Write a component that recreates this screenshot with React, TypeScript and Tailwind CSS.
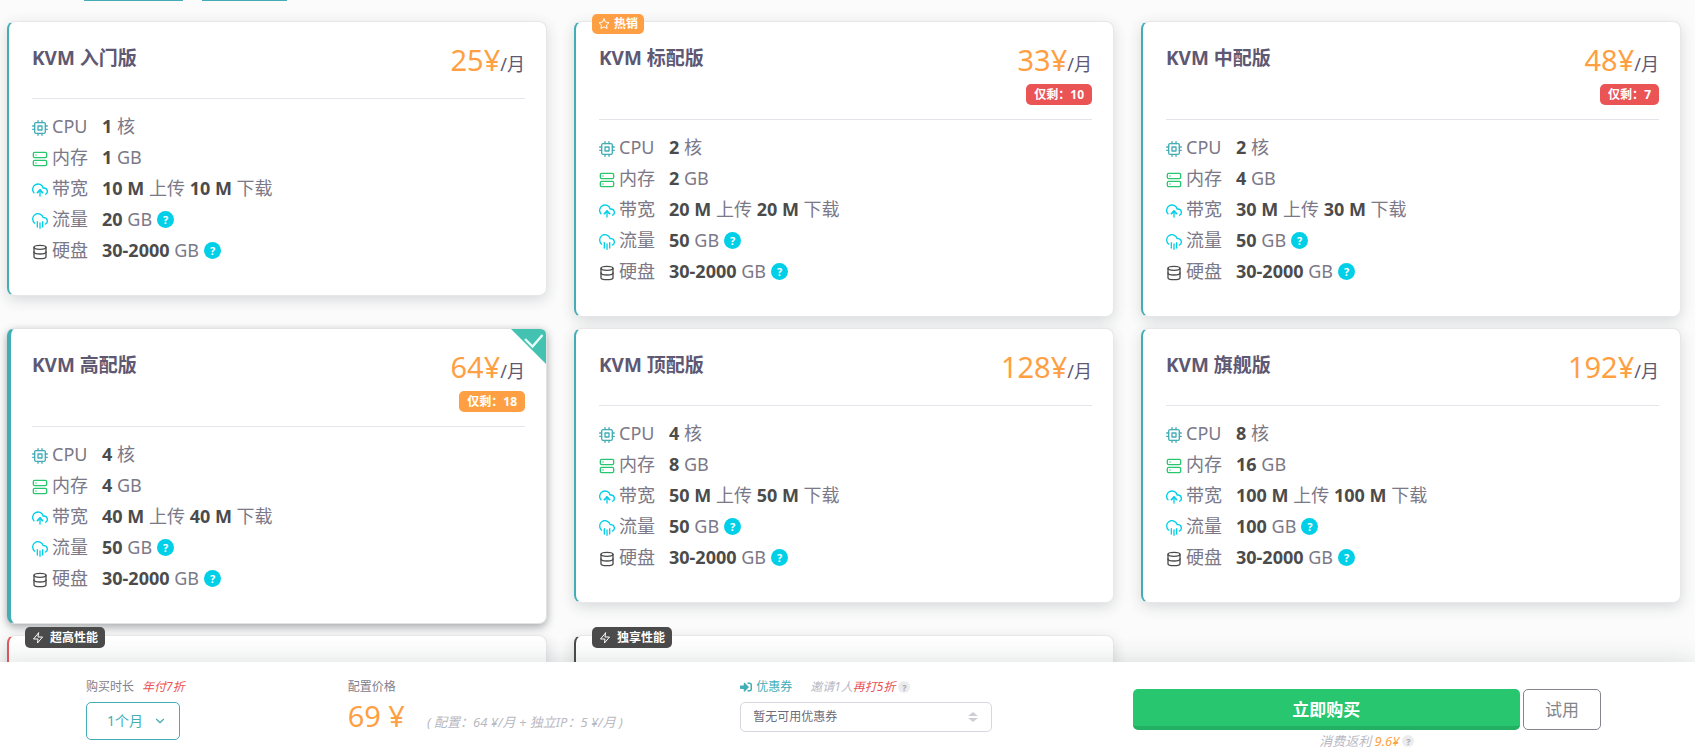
import React, { useState } from "react";
import clsx from "clsx";
import {
  FiChevronDown,
  FiCloudRain,
  FiCpu,
  FiDatabase,
  FiServer,
  FiStar,
  FiUploadCloud,
  FiZap,
} from "react-icons/fi";
import { FaSignInAlt } from "react-icons/fa";

interface Plan {
  id: string;
  name: string;
  price: number;
  left?: number;
  hot?: boolean;
  cores: number;
  memory: number;
  bandwidth: number;
  traffic: number;
}

const PLANS: Plan[] = [
  { id: "entry", name: "KVM 入门版", price: 25, cores: 1, memory: 1, bandwidth: 10, traffic: 20 },
  { id: "standard", name: "KVM 标配版", price: 33, left: 10, hot: true, cores: 2, memory: 2, bandwidth: 20, traffic: 50 },
  { id: "medium", name: "KVM 中配版", price: 48, left: 7, cores: 2, memory: 4, bandwidth: 30, traffic: 50 },
  { id: "high", name: "KVM 高配版", price: 64, left: 18, cores: 4, memory: 4, bandwidth: 40, traffic: 50 },
  { id: "top", name: "KVM 顶配版", price: 128, cores: 4, memory: 8, bandwidth: 50, traffic: 50 },
  { id: "flagship", name: "KVM 旗舰版", price: 192, cores: 8, memory: 16, bandwidth: 100, traffic: 100 },
];

function HelpButton() {
  return (
    <button
      type="button"
      aria-label="说明"
      className="ml-[5px] flex size-[17px] items-center justify-center rounded-full bg-[#00cfe8] text-[11px] leading-none font-bold text-white"
    >
      ?
    </button>
  );
}

function MutedHelp() {
  return (
    <button
      type="button"
      aria-label="说明"
      className="inline-flex size-3 items-center justify-center rounded-full bg-[#ececee] text-[9px] leading-none font-bold text-[#a9a7b0] not-italic"
    >
      ?
    </button>
  );
}

interface SpecRowProps {
  icon: React.ReactNode;
  label: string;
  help?: boolean;
  children: React.ReactNode;
}

function SpecRow({ icon, label, help, children }: SpecRowProps) {
  return (
    <li className="flex h-[31px] items-center">
      <span className="mt-[3px] mr-1 text-base">{icon}</span>
      <span className="w-[50px]">{label}</span>
      <span className="flex items-center whitespace-pre">
        {children}
        {help && <HelpButton />}
      </span>
    </li>
  );
}

function Num({ children }: { children: React.ReactNode }) {
  return <b className="font-bold text-[#4b4b4b]">{children}</b>;
}

interface PlanCardProps {
  plan: Plan;
  selected: boolean;
  onSelect: (id: string) => void;
}

function PlanCard({ plan, selected, onSelect }: PlanCardProps) {
  return (
    <article
      onClick={() => onSelect(plan.id)}
      className={clsx(
        "relative cursor-pointer rounded-lg border bg-white pt-[18px] pr-[21px] pb-7",
        selected
          ? "border-l-4 border-[#e2e3e4] border-l-[#43adb6] pl-[21px] shadow-[0_3px_9px_rgba(34,41,47,0.4)]"
          : "border-l-2 border-[#e7e7e9] border-l-[#43adb6] pl-[23px] shadow-[0_4px_14px_rgba(34,41,47,0.16)]"
      )}
    >
      {plan.hot && (
        <span className="absolute -top-2 left-4 flex h-5 items-center gap-1 rounded-[5px] bg-[#ff9f43] px-1.5 text-xs font-bold text-white">
          <FiStar />
          热销
        </span>
      )}
      {selected && (
        <svg className="absolute top-0 right-0 size-[35px]" viewBox="0 0 35 35">
          <path d="M0 0H29Q35 0 35 6V35Z" fill="#43c2b1" />
          <path d="M14 10l7.5 7.5L31.5 6" fill="none" stroke="#e9fffb" strokeWidth="2.4" />
        </svg>
      )}

      {/* Name and price */}
      <header className="flex items-start justify-between border-b border-[#e4e4ea] pb-[14px]">
        <h4 className="mt-[5px] text-[19px] leading-[27px] font-bold text-[#5e5873]">{plan.name}</h4>
        <div className="flex flex-col items-end">
          <div className="flex h-11 items-baseline leading-10 text-[#5e5873]">
            <span className="text-[29px] text-[#ff9f43]">{plan.price}¥</span>
            <span className="text-lg leading-10">/月</span>
          </div>
          {plan.left !== undefined && (
            <span
              className={clsx(
                "flex h-[21px] items-center rounded-[5px] px-2 text-xs font-bold text-white",
                plan.left > 10 ? "bg-[#ff9f43]" : "bg-[#ea5455]"
              )}
            >
              仅剩：{plan.left}
            </span>
          )}
        </div>
      </header>

      {/* Specs */}
      <ul className="mt-3 mb-px text-lg leading-[27px] text-[#7b7887]">
        <SpecRow icon={<FiCpu className="text-[#43adb6]" />} label="CPU">
          <Num>{plan.cores}</Num> 核
        </SpecRow>
        <SpecRow icon={<FiServer className="text-[#28c76f]" />} label="内存">
          <Num>{plan.memory}</Num> GB
        </SpecRow>
        <SpecRow icon={<FiUploadCloud className="text-[#00cfe8]" />} label="带宽">
          <Num>{plan.bandwidth} M</Num> 上传 <Num>{plan.bandwidth} M</Num> 下载
        </SpecRow>
        <SpecRow icon={<FiCloudRain className="text-[#00cfe8]" />} label="流量" help>
          <Num>{plan.traffic}</Num> GB
        </SpecRow>
        <SpecRow icon={<FiDatabase className="text-[#4b4b4b]" />} label="硬盘" help>
          <Num>30-2000</Num> GB
        </SpecRow>
      </ul>
    </article>
  );
}

function SeriesCard({ tag, className }: { tag: string; className: string }) {
  return (
    <article
      className={clsx(
        "relative min-h-[275px] rounded-lg border border-l-2 border-[#e7e7e9] bg-white shadow-[0_4px_14px_rgba(34,41,47,0.16)]",
        className
      )}
    >
      <span className="absolute -top-[9px] left-4 flex h-[21px] items-center gap-1.5 rounded-[5px] bg-[#4b4b4b] px-[7px] text-xs font-bold text-white">
        <FiZap />
        {tag}
      </span>
    </article>
  );
}

function OrderBar() {
  return (
    <footer className="z-10 grid h-[90px] shrink-0 grid-cols-12 bg-white pt-4 pr-[39px] pl-[86px] text-xs leading-[18px] text-[#82808c] shadow-[0_0_24px_rgba(34,41,47,0.16)]">
      {/* Duration */}
      <div className="col-span-2">
        <div className="flex gap-2">
          <span>购买时长</span>
          <em className="text-[#ea5455]">年付7折</em>
        </div>
        <button
          type="button"
          className="mt-1.5 flex h-[38px] w-[94px] items-center justify-end gap-2.5 rounded-[5px] border border-[#43adb6] pr-3 text-sm text-[#43adb6]"
        >
          1个月
          <FiChevronDown />
        </button>
      </div>

      {/* Price */}
      <div className="col-span-3">
        <div>配置价格</div>
        <div className="flex items-baseline gap-[22px]">
          <span className="text-[29px] leading-10 text-[#ff9f43]">69 ¥</span>
          <em className="text-[13px] whitespace-pre text-[#b9b9c3]">( 配置：64 ¥/月 + 独立IP：5 ¥/月 )</em>
        </div>
      </div>

      {/* Coupon */}
      <div className="col-span-3">
        <div className="flex items-center">
          <a href="#coupon" className="flex items-center gap-1 text-[#43adb6]">
            <FaSignInAlt />
            优惠券
          </a>
          <em className="mr-[3px] ml-[18px] text-[#b9b9c3]">
            邀请1人<span className="text-[#ea5455]">再打5折</span>
          </em>
          <MutedHelp />
        </div>
        <div className="relative mt-1.5 w-[252px]">
          <select
            aria-label="优惠券"
            className="h-[30px] w-full appearance-none rounded-[5px] border border-[#d8d6de] bg-white pl-3 text-xs text-[#6e6b7b]"
          >
            <option>暂无可用优惠券</option>
          </select>
          <svg className="pointer-events-none absolute top-[9px] right-[14px] h-3 w-2.5" viewBox="0 0 10 12">
            <path d="M0 5L5 1l5 4zM0 7h10l-5 4z" fill="#cfcdd6" />
          </svg>
        </div>
      </div>

      {/* Actions */}
      <div className="col-span-4 pt-[11px] pr-[55px]">
        <div className="flex gap-[3px]">
          <button
            type="button"
            className="h-[41px] flex-1 rounded-[5px] border-b-4 border-[#24b062] bg-[#28c76f] pt-1 text-[17px] font-bold text-white"
          >
            立即购买
          </button>
          <button
            type="button"
            className="h-[41px] w-[78px] rounded-[5px] border border-[#82868b] text-[17px] text-[#82868b]"
          >
            试用
          </button>
        </div>
        <div className="flex items-center justify-center gap-[3px] pt-0.5">
          <em className="text-[13px] text-[#b9b9c3]">
            消费返利 <span className="text-[#ff9f43]">9.6¥</span>
          </em>
          <MutedHelp />
        </div>
      </div>
    </footer>
  );
}

export default function App() {
  const [selectedId, setSelectedId] = useState("high");

  return (
    <div className="flex h-screen flex-col overflow-hidden bg-[#fbfbfb] font-['Noto_Sans','Noto_Sans_CJK_SC',sans-serif]">
      <main className="flex-1 overflow-hidden">
        {/* Lower edge of the tab bar */}
        <div className="flex h-px gap-[19px] pl-[84px]">
          <span className="w-[99px] bg-[#43adb6]" />
          <span className="w-[85px] bg-[#43adb6]" />
        </div>

        <div className="grid grid-cols-3 items-start gap-x-[27px] gap-y-[11px] pt-5 pr-[14px] pl-[7px]">
          {PLANS.map((plan) => (
            <PlanCard
              key={plan.id}
              plan={plan}
              selected={plan.id === selectedId}
              onSelect={setSelectedId}
            />
          ))}
          <SeriesCard tag="超高性能" className="border-l-[#e0575a]" />
          <SeriesCard tag="独享性能" className="border-l-[#4b4b4b]" />
        </div>
      </main>

      <OrderBar />
    </div>
  );
}
